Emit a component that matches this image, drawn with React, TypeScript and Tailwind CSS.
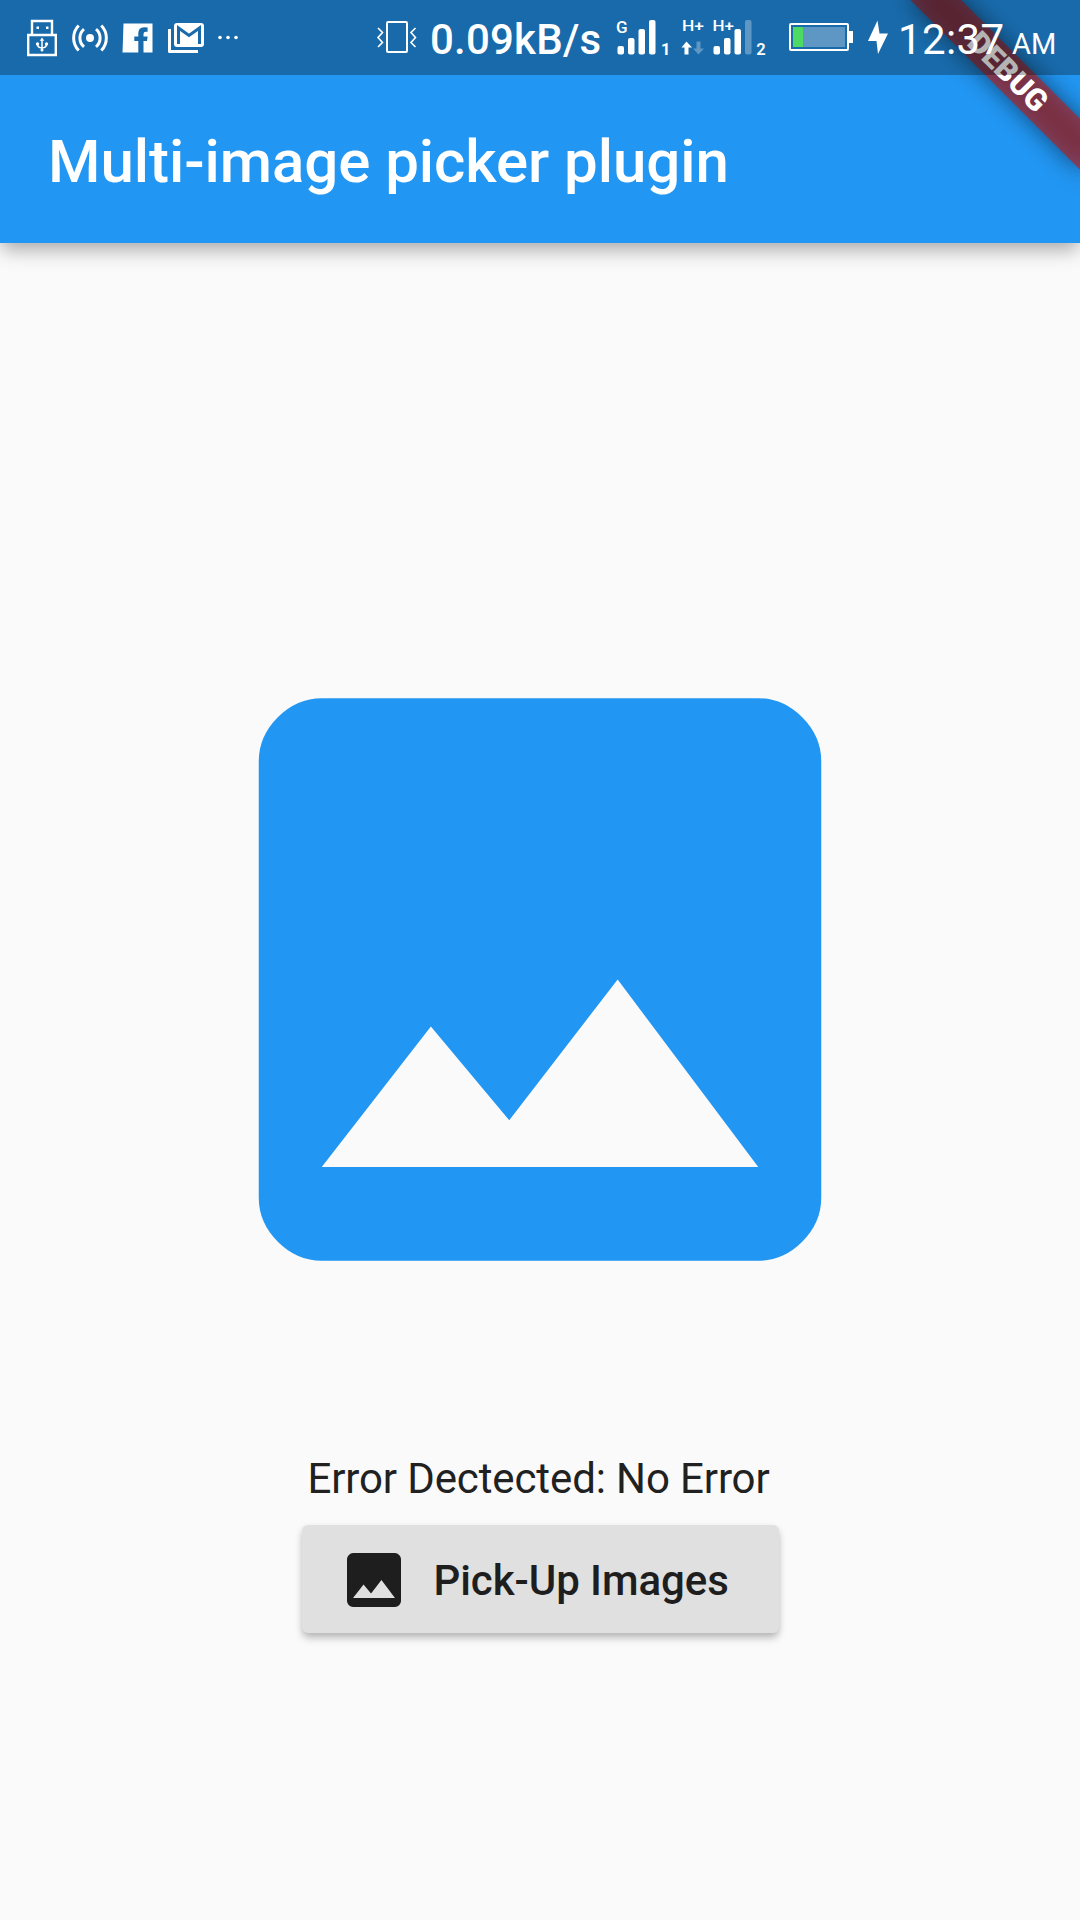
import React from "react";

const IMAGE_PATH =
  "M363 576L214 768H810L618 512L470 704zM896 810q0 34-26 60t-60 26H214q-34 0-60-26t-26-60V214q0-34 26-60t60-26H810q34 0 60 26t26 60z";

function ImageIcon({ className }: { className: string }) {
  return (
    <svg viewBox="0 -0.7 1024 1024" className={className} fill="currentColor" fillRule="evenodd">
      <path d={IMAGE_PATH} />
    </svg>
  );
}

function UsbIcon() {
  return (
    <svg viewBox="24 0 36 75" className="h-[75px] w-9 shrink-0" fill="none" stroke="#fff">
      <path d="M32 34.500V21h20v13.500" strokeWidth="2.400" />
      <path d="M28.200 35h27.600v20H28.200z" strokeWidth="2.400" />
      <path d="M36.500 26.500h2.500v2.500h-2.500zM46 26.500h2.500v2.500h-2.500z" fill="#fff" stroke="none" />
      <path d="M42 40v11M37.500 43.500v1q0 3 4.500 3.500M46.500 43.500v1q0 3-4.500 3.500" strokeWidth="1.500" />
      <path d="M42 37.500l2.300 3.300h-4.600z" fill="#fff" stroke="none" />
      <circle cx="37.500" cy="44" r="1.700" fill="#fff" stroke="none" />
      <circle cx="46.500" cy="44" r="1.700" fill="#fff" stroke="none" />
      <circle cx="42" cy="50" r="1.500" fill="#fff" stroke="none" />
    </svg>
  );
}

function HotspotIcon() {
  return (
    <svg viewBox="72 0 36 75" className="h-[75px] w-9 shrink-0" fill="none" stroke="#fff" strokeWidth="3">
      <circle cx="90" cy="38" r="4" fill="#fff" stroke="none" />
      <path d="M84 29.200a11.500 11.500 0 0 0 0 17.600M96 29.200a11.500 11.500 0 0 1 0 17.600" />
      <path d="M78.700 25.500a18 18 0 0 0 0 25M101.300 25.500a18 18 0 0 1 0 25" />
    </svg>
  );
}

function FacebookIcon() {
  return (
    <svg viewBox="120 0 36 75" className="h-[75px] w-9 shrink-0" fill="#fff">
      <path d="M123.500 23.500h29v29h-9V41h3.500l.6-4.500h-4.100v-2.500q0-2.300 2.300-2.300h1.800v-4.200q-1.400-.3-3.500-.3-5.800 0-5.800 6v3.300h-4V41h4v11.500h-15.800z" />
    </svg>
  );
}

function MailStackIcon() {
  return (
    <svg viewBox="168 0 36 75" className="h-[75px] w-9 shrink-0">
      <path d="M169.500 29v22.500h28.500" fill="none" stroke="#fff" strokeWidth="3" strokeLinejoin="round" />
      <rect x="174" y="23" width="30" height="24" rx="3" fill="#fff" />
      <path d="M178.500 44V28l10.500 7.500L199.500 28v16" fill="none" stroke="#1a6aab" strokeWidth="3" />
    </svg>
  );
}

function DotsIcon() {
  return (
    <svg viewBox="216 0 24 75" className="h-[75px] w-6 shrink-0" fill="#fff">
      <circle cx="220" cy="37.500" r="1.800" />
      <circle cx="228" cy="37.500" r="1.800" />
      <circle cx="236" cy="37.500" r="1.800" />
    </svg>
  );
}

function VibrateIcon() {
  return (
    <svg viewBox="374 0 48 75" className="h-[75px] w-12 shrink-0" fill="none" stroke="#fff">
      <rect x="387" y="22" width="20" height="30" rx="1" strokeWidth="2" />
      <path d="M378 28l4.500 4.500-4.500 5 4.500 5-4.500 4.500M415.500 28l-4.500 4.500 4.500 5-4.500 5 4.500 4.500" strokeWidth="1.600" />
    </svg>
  );
}

function SignalIcons() {
  return (
    <svg viewBox="612 0 158 75" className="h-[75px] w-[158px] shrink-0" fill="#fff" fontFamily="Roboto, sans-serif" fontWeight="500">
      <text x="616" y="32.500" fontSize="17">G</text>
      <rect x="617.500" y="46" width="6.500" height="8.500" rx="2" />
      <rect x="628" y="38" width="6.500" height="16.500" rx="2" />
      <rect x="638.500" y="29" width="6.500" height="25.500" rx="2" />
      <rect x="649" y="20" width="6.500" height="34.500" rx="2" />
      <text x="661" y="54.500" fontSize="16.500" fontWeight="700">1</text>
      <text x="682" y="30.500" fontSize="15" textLength="22" lengthAdjust="spacingAndGlyphs">H+</text>
      <path d="M686.500 41.500l5.500 6h-3.500v7h-4v-7H681.500z" />
      <path d="M698.500 54.500l5.500-6h-3.500v-7h-4v7H693z" opacity=".3" />
      <text x="712.500" y="31" fontSize="15" textLength="21.500" lengthAdjust="spacingAndGlyphs">H+</text>
      <rect x="713.500" y="46" width="6.500" height="8.500" rx="2" />
      <rect x="724" y="38" width="6.500" height="16.500" rx="2" />
      <rect x="734.500" y="29" width="6.500" height="25.500" rx="2" />
      <rect x="745" y="20" width="6.500" height="34.500" rx="2" opacity=".3" />
      <text x="756.300" y="54.500" fontSize="16.500" fontWeight="600">2</text>
    </svg>
  );
}

function BatteryIcon() {
  return (
    <svg viewBox="786 0 70 75" className="h-[75px] w-[70px] shrink-0">
      <rect x="790" y="24" width="58" height="26" rx="1" fill="none" stroke="#fff" strokeWidth="2" />
      <path d="M849 31h4v12h-4z" fill="#fff" />
      <path d="M793 27h10v20h-10z" fill="#4cd964" />
      <path d="M803 27h42v20h-42z" fill="#fff" opacity=".3" />
    </svg>
  );
}

function BoltIcon() {
  return (
    <svg viewBox="864 0 28 75" className="h-[75px] w-7 shrink-0" fill="#fff">
      <path d="M877.500 20.500L868 41h8.500l1.500 13 10-20.500h-8.500z" />
    </svg>
  );
}

function StatusBar() {
  return (
    <div className="absolute inset-x-0 top-0 flex h-[75px] items-center bg-[#080808]/30 pl-6 text-white">
      <div className="flex gap-3">
        <UsbIcon />
        <HotspotIcon />
        <FacebookIcon />
        <MailStackIcon />
        <DotsIcon />
      </div>
      <div className="ml-[134px] flex items-center">
        <VibrateIcon />
        <span className="ml-2 w-[182px] pt-[3px] text-[42px] leading-[49px] font-medium tracking-[0.2px] whitespace-nowrap">0.09kB/s</span>
        <SignalIcons />
      </div>
      <div className="ml-4 flex items-center gap-2">
        <BatteryIcon />
        <BoltIcon />
      </div>
      <div className="ml-[6px] flex items-baseline pt-2 leading-[49px] whitespace-nowrap">
        <span className="w-[114px] text-[42px] tracking-[0.4px]">12:37</span>
        <span className="text-[29px]">AM</span>
      </div>
    </div>
  );
}

function DebugBanner() {
  return (
    <div className="absolute top-0 right-0 size-[243px] overflow-hidden">
      <div className="absolute top-0 left-[243px] size-0 rotate-45">
        <div className="absolute top-[84px] -left-[120px] h-9 w-60 bg-black/50 blur-[12px]" />
        <div className="absolute top-[84px] -left-[120px] flex h-9 w-60 items-center justify-center bg-[#b71c1c]/63 text-[30.600px] leading-9 font-black tracking-[0.2px] text-white">
          DEBUG
        </div>
      </div>
    </div>
  );
}

export default function App() {
  return (
    <div className="flex h-[1920px] w-[1080px] flex-col overflow-hidden bg-[#fafafa] font-[Roboto,sans-serif]">
      <header className="relative h-[243px] shrink-0 bg-[#2196f3] shadow-[0_12px_18px_-3px_rgba(0,0,0,0.22),0_3px_15px_0_rgba(0,0,0,0.12)]">
        <div className="flex h-full items-center pt-[81px] pl-12">
          <h1 className="text-[60px] leading-[70px] font-medium tracking-[-0.05px] whitespace-nowrap text-white">Multi-image picker plugin</h1>
        </div>
        <DebugBanner />
        <StatusBar />
      </header>
      <main className="flex flex-1 flex-col items-center pt-[361px]">
        <ImageIcon className="size-[750px] shrink-0 text-[#2196f3]" />
        <p className="mt-[100px] pr-[3px] text-[42px] leading-[49px] tracking-[-0.12px] text-[#212121]">Error Dectected: No Error</p>
        <button className="mt-[22px] flex h-[108px] w-[477px] items-center gap-6 rounded-md bg-[#e0e0e0] pl-9 text-[#1e1e1e] shadow-[0_6px_8px_-1px_rgba(0,0,0,0.22),0_2px_6px_0_rgba(0,0,0,0.1)]">
          <ImageIcon className="mt-0.5 size-[72px] shrink-0" />
          <span className="pt-0.5 text-[42px] leading-[49px] font-medium tracking-[-0.07px] whitespace-nowrap">Pick-Up Images</span>
        </button>
      </main>
    </div>
  );
}
